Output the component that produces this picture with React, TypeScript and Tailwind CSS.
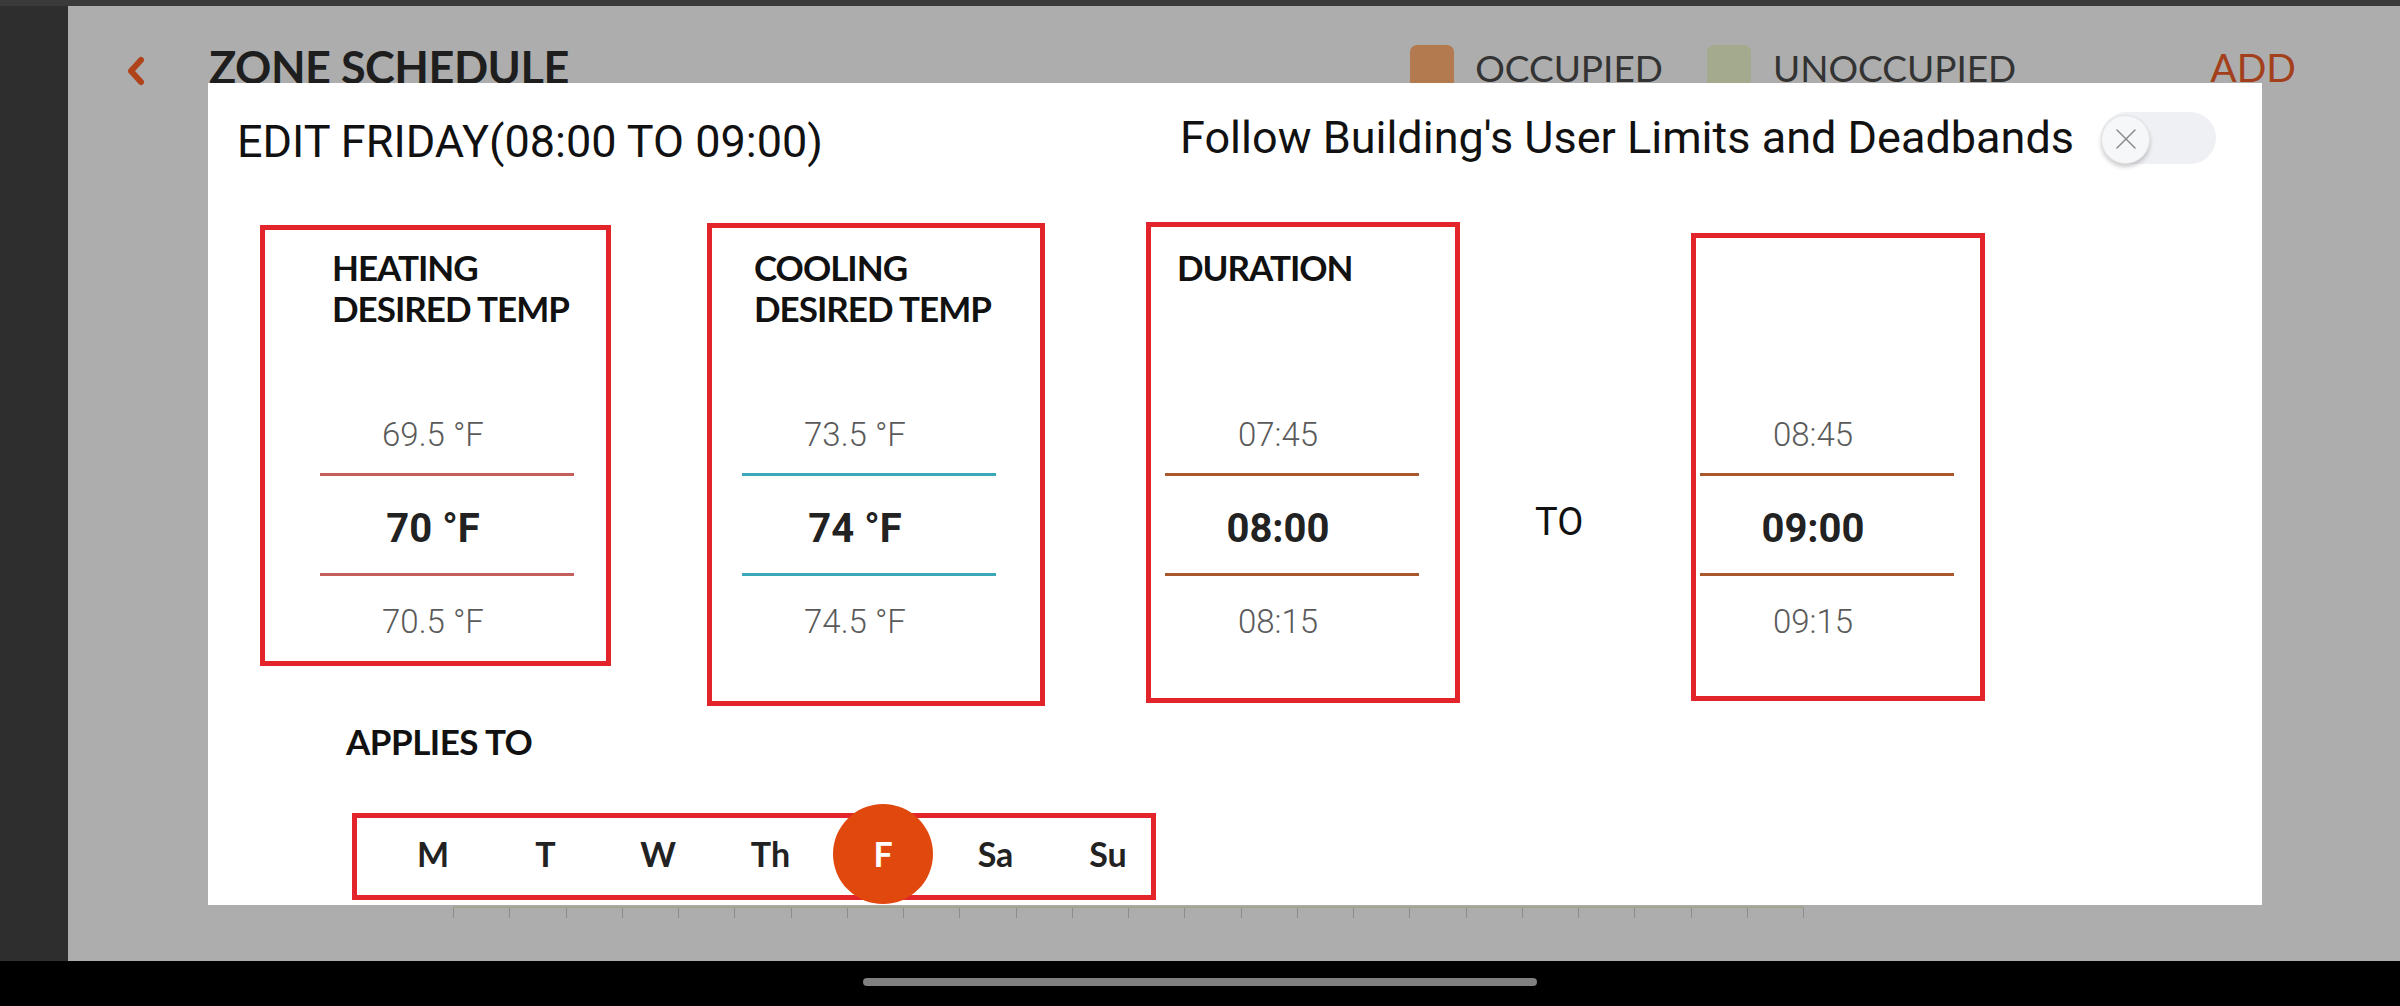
import React from 'react';
import { X } from 'lucide-react';

type PickerProps = {
  title?: string[];
  values: [string, string, string];
  lineClass: string;
};

// one wheel column: label on top, previous / current / next value
const Picker: React.FC<PickerProps> = ({ title, values, lineClass }) => {
  return (
    <div className="w-[254px] flex flex-col">
      <div className="h-[82px] pl-3 whitespace-nowrap font-[family-name:Lato,sans-serif] font-bold text-[35px] leading-[41px] text-[#111] tracking-[-1px]">
        {title?.map((t) => (
          <div key={t}>{t}</div>
        ))}
      </div>
      <div className="mt-[75px] h-[60px] w-[226px] flex items-center justify-center text-[33px] leading-none font-light text-[#5a5a5a]">
        {values[0]}
      </div>
      <div className={`mt-[9px] h-[3px] w-full ${lineClass}`} />
      <div className="mt-[23px] h-[60px] w-[226px] flex items-center justify-center text-[40px] leading-none font-bold text-[#222]">
        {values[1]}
      </div>
      <div className={`mt-[14px] h-[3px] w-full ${lineClass}`} />
      <div className="mt-[15px] h-[60px] w-[226px] flex items-center justify-center text-[33px] leading-none font-light text-[#5a5a5a]">
        {values[2]}
      </div>
    </div>
  );
};

const days = ['M', 'T', 'W', 'Th', 'F', 'Sa', 'Su'];

const App: React.FC = () => {
  const ticks = Array.from({ length: 25 }, (_, i) => i);

  return (
    <div className="w-[2400px] h-[1006px] bg-black flex flex-col overflow-hidden font-[family-name:Roboto,sans-serif]">
      <div className="h-[6px] bg-[#3a3a3a]" />
      <div className="flex h-[955px]">
        <div className="w-[68px] bg-[#2e2e2e]" />
        <div className="relative flex-1 bg-[#adadad]">
          {/* page header, mostly covered by the dialog */}
          <div className="mt-[31px] h-[60px] flex items-center pl-[57px] pr-[104px]">
            <svg width="20" height="30" viewBox="0 0 20 30" className="mt-[8px]">
              <path d="M16 4 L6 15 L16 26" fill="none" stroke="#b0431a" strokeWidth="6" strokeLinecap="round" strokeLinejoin="round" />
            </svg>
            <div className="ml-[64px] font-[family-name:Lato,sans-serif] font-bold text-[45px] leading-none text-[#1e1e1e] tracking-[-0.5px]">
              ZONE SCHEDULE
            </div>
            <div className="ml-auto flex items-center font-[family-name:Lato,sans-serif]">
              <div className="w-[44px] h-[44px] rounded-[7px] bg-[#b27a4e]" />
              <span className="ml-[21px] text-[37px] text-[#333] leading-none">OCCUPIED</span>
              <div className="ml-[44px] w-[44px] h-[44px] rounded-[7px] bg-[#a4aa8e]" />
              <span className="ml-[22px] text-[37px] text-[#333] leading-none">UNOCCUPIED</span>
              <span className="ml-[194px] text-[39px] text-[#a3401b] leading-none">ADD</span>
            </div>
          </div>

          {/* schedule grid peeking out under the dialog */}
          <div className="mt-[809px] ml-[385px] w-[1351px]">
            <div className="h-[2px] bg-[#a2a690]" />
            <div className="flex justify-between">
              {ticks.map((t) => (
                <div key={t} className="w-px h-[10px] bg-[#8c8c8c]" />
              ))}
            </div>
          </div>

          {/* edit dialog */}
          <div className="absolute left-[140px] top-[77px] w-[2054px] h-[822px] bg-white px-[29px] pt-[33px]">
            <div className="flex items-start justify-between pr-[17px]">
              <div className="text-[45px] leading-[52px] text-[#111]">EDIT FRIDAY(08:00 TO 09:00)</div>
              <div className="-mt-[6px] h-[55px] flex items-center gap-[27px]">
                <span className="text-[45px] leading-none text-[#111]">Follow Building's User Limits and Deadbands</span>
                <div className="w-[115px] h-[52px] rounded-full bg-[#eff0f4] flex items-center">
                  <div className="mt-[3px] w-[49px] h-[49px] rounded-full bg-[#f6f7f9] border border-[#e4e4e6] shadow-[0_3px_4px_rgba(0,0,0,0.2)] flex items-center justify-center">
                    <X size={36} strokeWidth={1} className="text-[#8a8a8a]" />
                  </div>
                </div>
              </div>
            </div>

            <div className="mt-[54px] flex items-start">
              <div className="ml-[23px] mt-[3px] w-[351px] h-[441px] pl-[55px] pt-[17px] border-[5px] border-[#e3242b]">
                <Picker title={['HEATING', 'DESIRED TEMP']} values={['69.5 °F', '70 °F', '70.5 °F']} lineClass="bg-[#c45f5c]" />
              </div>
              <div className="ml-[96px] mt-[1px] w-[338px] h-[483px] pl-[30px] pt-[19px] border-[5px] border-[#e3242b]">
                <Picker title={['COOLING', 'DESIRED TEMP']} values={['73.5 °F', '74 °F', '74.5 °F']} lineClass="bg-[#3aa8b8]" />
              </div>
              <div className="ml-[101px] w-[314px] h-[481px] pl-[14px] pt-[20px] border-[5px] border-[#e3242b]">
                <Picker title={['DURATION']} values={['07:45', '08:00', '08:15']} lineClass="bg-[#a8582c]" />
              </div>
              <div className="ml-[75px] mt-[277px] w-[48px] text-[38px] leading-[46px] text-[#111]">TO</div>
              <div className="ml-[108px] mt-[11px] w-[294px] h-[468px] pl-[4px] pt-[9px] border-[5px] border-[#e3242b]">
                <Picker values={['08:45', '09:00', '09:15']} lineClass="bg-[#a8582c]" />
              </div>
            </div>

            <div className="mt-[15px] ml-[109px] font-[family-name:Lato,sans-serif] font-bold text-[35px] leading-[41px] text-[#111] tracking-[-0.5px]">
              APPLIES TO
            </div>

            <div className="mt-[51px] ml-[115px] w-[804px] h-[87px] border-[5px] border-[#e3242b] flex items-center pl-[26px] pb-[5px] gap-[12.5px]">
              {days.map((d) => (
                <div
                  key={d}
                  className={`relative z-10 shrink-0 w-[100px] h-[100px] rounded-full flex items-center justify-center font-[family-name:Lato,sans-serif] font-bold text-[34px] leading-none ${
                    d === 'F' ? 'bg-[#e1480e] text-white' : 'text-[#222]'
                  }`}
                >
                  {d}
                </div>
              ))}
            </div>
          </div>
        </div>
      </div>
      <div className="flex-1 flex justify-center pt-[17px]">
        <div className="w-[674px] h-[8px] rounded-full bg-[#808080]" />
      </div>
    </div>
  );
};

export default App;
